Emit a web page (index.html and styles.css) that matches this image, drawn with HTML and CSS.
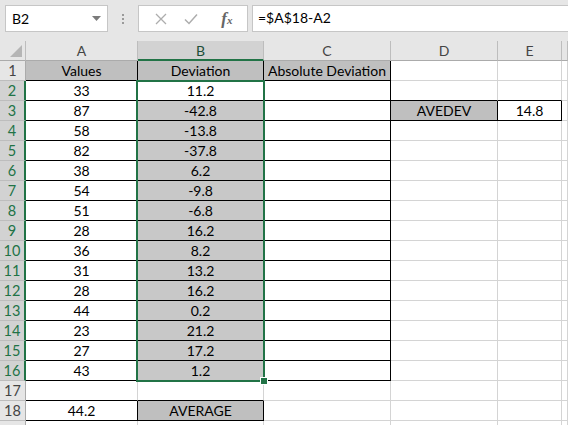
FILE: index.html
```html
<!DOCTYPE html>
<html lang="en">

<head>
  <meta charset="UTF-8" />
  <title>AVEDEV</title>
  <link rel="stylesheet" href="styles.css">
</head>

<body>
  <div class="toolbar">
    <div class="namebox">
      <span>B2</span>
      <svg class="drop" width="9" height="5" viewBox="0 0 9 5"><polygon points="0,0 9,0 4.5,5" fill="#7b7b7b" /></svg>
    </div>
    <div class="dots"><i></i><i></i><i></i></div>
    <div class="buttons">
      <svg width="12" height="12" viewBox="0 0 12 12"><path d="M1 1 L11 11 M11 1 L1 11" stroke="#adadad" stroke-width="1.3" /></svg>
      <svg width="14" height="12" viewBox="0 0 14 12"><path d="M1 6.5 L5 10.5 L13 1.5" stroke="#adadad" stroke-width="1.5" fill="none" /></svg>
      <span class="fx"><i>f</i><sub>x</sub></span>
    </div>
    <div class="formula">=$A$18-A2</div>
  </div>

  <div class="sheet">
    <div class="corner"><svg width="25" height="19" viewBox="0 0 25 19"><polygon points="22,4 22,16 10,16" fill="#b5b5b5" /></svg></div>
    <div class="ch">A</div>
    <div class="ch hl-col">B</div>
    <div class="ch">C</div>
    <div class="ch">D</div>
    <div class="ch">E</div>
    <div class="ch last"></div>

    <div class="rh">1</div>
    <div class="c b fill">Values</div>
    <div class="c b fill">Deviation</div>
    <div class="c b fill">Absolute Deviation</div>
    <div class="c"></div>
    <div class="c"></div>
    <div class="c"></div>

    <div class="rh hl">2</div>
    <div class="c b">33</div>
    <div class="c b">11.2</div>
    <div class="c b"></div>
    <div class="c bb"></div>
    <div class="c bb"></div>
    <div class="c"></div>

    <div class="rh hl">3</div>
    <div class="c b">87</div>
    <div class="c b sel">-42.8</div>
    <div class="c b"></div>
    <div class="c b fill">AVEDEV</div>
    <div class="c b">14.8</div>
    <div class="c"></div>

    <div class="rh hl">4</div>
    <div class="c b">58</div>
    <div class="c b sel">-13.8</div>
    <div class="c b"></div>
    <div class="c"></div>
    <div class="c"></div>
    <div class="c"></div>

    <div class="rh hl">5</div>
    <div class="c b">82</div>
    <div class="c b sel">-37.8</div>
    <div class="c b"></div>
    <div class="c"></div>
    <div class="c"></div>
    <div class="c"></div>

    <div class="rh hl">6</div>
    <div class="c b">38</div>
    <div class="c b sel">6.2</div>
    <div class="c b"></div>
    <div class="c"></div>
    <div class="c"></div>
    <div class="c"></div>

    <div class="rh hl">7</div>
    <div class="c b">54</div>
    <div class="c b sel">-9.8</div>
    <div class="c b"></div>
    <div class="c"></div>
    <div class="c"></div>
    <div class="c"></div>

    <div class="rh hl">8</div>
    <div class="c b">51</div>
    <div class="c b sel">-6.8</div>
    <div class="c b"></div>
    <div class="c"></div>
    <div class="c"></div>
    <div class="c"></div>

    <div class="rh hl">9</div>
    <div class="c b">28</div>
    <div class="c b sel">16.2</div>
    <div class="c b"></div>
    <div class="c"></div>
    <div class="c"></div>
    <div class="c"></div>

    <div class="rh hl">10</div>
    <div class="c b">36</div>
    <div class="c b sel">8.2</div>
    <div class="c b"></div>
    <div class="c"></div>
    <div class="c"></div>
    <div class="c"></div>

    <div class="rh hl">11</div>
    <div class="c b">31</div>
    <div class="c b sel">13.2</div>
    <div class="c b"></div>
    <div class="c"></div>
    <div class="c"></div>
    <div class="c"></div>

    <div class="rh hl">12</div>
    <div class="c b">28</div>
    <div class="c b sel">16.2</div>
    <div class="c b"></div>
    <div class="c"></div>
    <div class="c"></div>
    <div class="c"></div>

    <div class="rh hl">13</div>
    <div class="c b">44</div>
    <div class="c b sel">0.2</div>
    <div class="c b"></div>
    <div class="c"></div>
    <div class="c"></div>
    <div class="c"></div>

    <div class="rh hl">14</div>
    <div class="c b">23</div>
    <div class="c b sel">21.2</div>
    <div class="c b"></div>
    <div class="c"></div>
    <div class="c"></div>
    <div class="c"></div>

    <div class="rh hl">15</div>
    <div class="c b">27</div>
    <div class="c b sel">17.2</div>
    <div class="c b"></div>
    <div class="c"></div>
    <div class="c"></div>
    <div class="c"></div>

    <div class="rh hl">16</div>
    <div class="c b">43</div>
    <div class="c b sel">1.2</div>
    <div class="c b"></div>
    <div class="c"></div>
    <div class="c"></div>
    <div class="c"></div>

    <div class="rh">17</div>
    <div class="c bb"></div>
    <div class="c bb"></div>
    <div class="c"></div>
    <div class="c"></div>
    <div class="c"></div>
    <div class="c"></div>

    <div class="rh">18</div>
    <div class="c b">44.2</div>
    <div class="c b fill">AVERAGE</div>
    <div class="c"></div>
    <div class="c"></div>
    <div class="c"></div>
    <div class="c"></div>

    <div class="rh"></div>
    <div class="c"></div>
    <div class="c"></div>
    <div class="c"></div>
    <div class="c"></div>
    <div class="c"></div>
    <div class="c"></div>

    <span class="selection"><span class="handle"></span></span>
  </div>
</body>

</html>
```

FILE: styles.css
```css
body {
  margin: 0;
  width: 568px;
  height: 425px;
  overflow: hidden;
  background: #fff;
  font-family: Lato, "Liberation Sans", sans-serif;
  font-size: 14px;
  color: #000;
}

.toolbar {
  height: 41px;
  box-sizing: border-box;
  background: #e6e6e6;
  display: flex;
  align-items: flex-start;
  padding: 5px 0 0 5px;
}

.namebox {
  width: 103px;
  height: 27px;
  box-sizing: border-box;
  background: #fff;
  border: 1px solid #c6c6c6;
  display: flex;
  align-items: center;
  justify-content: space-between;
  padding: 0 6px 0 6px;
}

.dots {
  width: 30px;
  height: 27px;
  display: flex;
  flex-direction: column;
  align-items: center;
  justify-content: center;
  gap: 2px;
}

.dots i {
  width: 2px;
  height: 2px;
  background: #9a9a9a;
}

.buttons {
  width: 110px;
  height: 27px;
  box-sizing: border-box;
  background: #fff;
  border: 1px solid #c6c6c6;
  display: flex;
  align-items: center;
  justify-content: space-around;
  padding: 0 6px 0 8px;
}

.fx {
  font-family: "Liberation Serif", serif;
  font-size: 17px;
  font-weight: bold;
  color: #666;
  margin-left: 6px;
}

.fx sub {
  font-size: 11px;
  font-style: italic;
  vertical-align: 0;
}

.formula {
  flex: 1;
  margin-left: 4px;
  height: 27px;
  box-sizing: border-box;
  background: #fff;
  border: 1px solid #c6c6c6;
  border-right: none;
  padding-left: 5px;
  line-height: 24px;
}

.sheet {
  position: relative;
  display: grid;
  grid-template-columns: 26px 112px 126px 127px 107px 64px 1fr;
  grid-auto-rows: 20px;
}

.sheet > div {
  box-sizing: border-box;
  border-right: 1px solid #d4d4d4;
  border-bottom: 1px solid #d4d4d4;
  line-height: 19px;
  text-align: center;
  white-space: nowrap;
  overflow: hidden;
}

.corner,
.ch,
.rh {
  background: #e6e6e6;
  color: #444;
}

.sheet > .corner,
.sheet > .ch {
  border-right-color: #bdbdbd;
  border-bottom-color: #ababab;
}

.sheet > .rh {
  border-right-color: #ababab;
  border-bottom-color: #bdbdbd;
  font-size: 14.5px;
}

.corner svg {
  display: block;
}

.sheet > .hl-col {
  background: #d2d2d2;
  color: #1e4e38;
  border-bottom: 2px solid #217346;
}

.sheet > .hl {
  background: #d2d2d2;
  color: #217346;
  border-right: 2px solid #217346;
}

.sheet > .b {
  border-right-color: #000;
  border-bottom-color: #000;
}

.sheet > .bb {
  border-bottom-color: #000;
}

.fill {
  background: #bfbfbf;
}

.sel {
  background: #c8c8c8;
}

.selection {
  position: absolute;
  left: 136px;
  top: 39px;
  width: 129px;
  height: 302px;
  box-sizing: border-box;
  border: 2px solid #217346;
  pointer-events: none;
}

.handle {
  position: absolute;
  right: -5px;
  bottom: -5px;
  width: 6px;
  height: 6px;
  background: #217346;
  border: 1px solid #fff;
}
```
